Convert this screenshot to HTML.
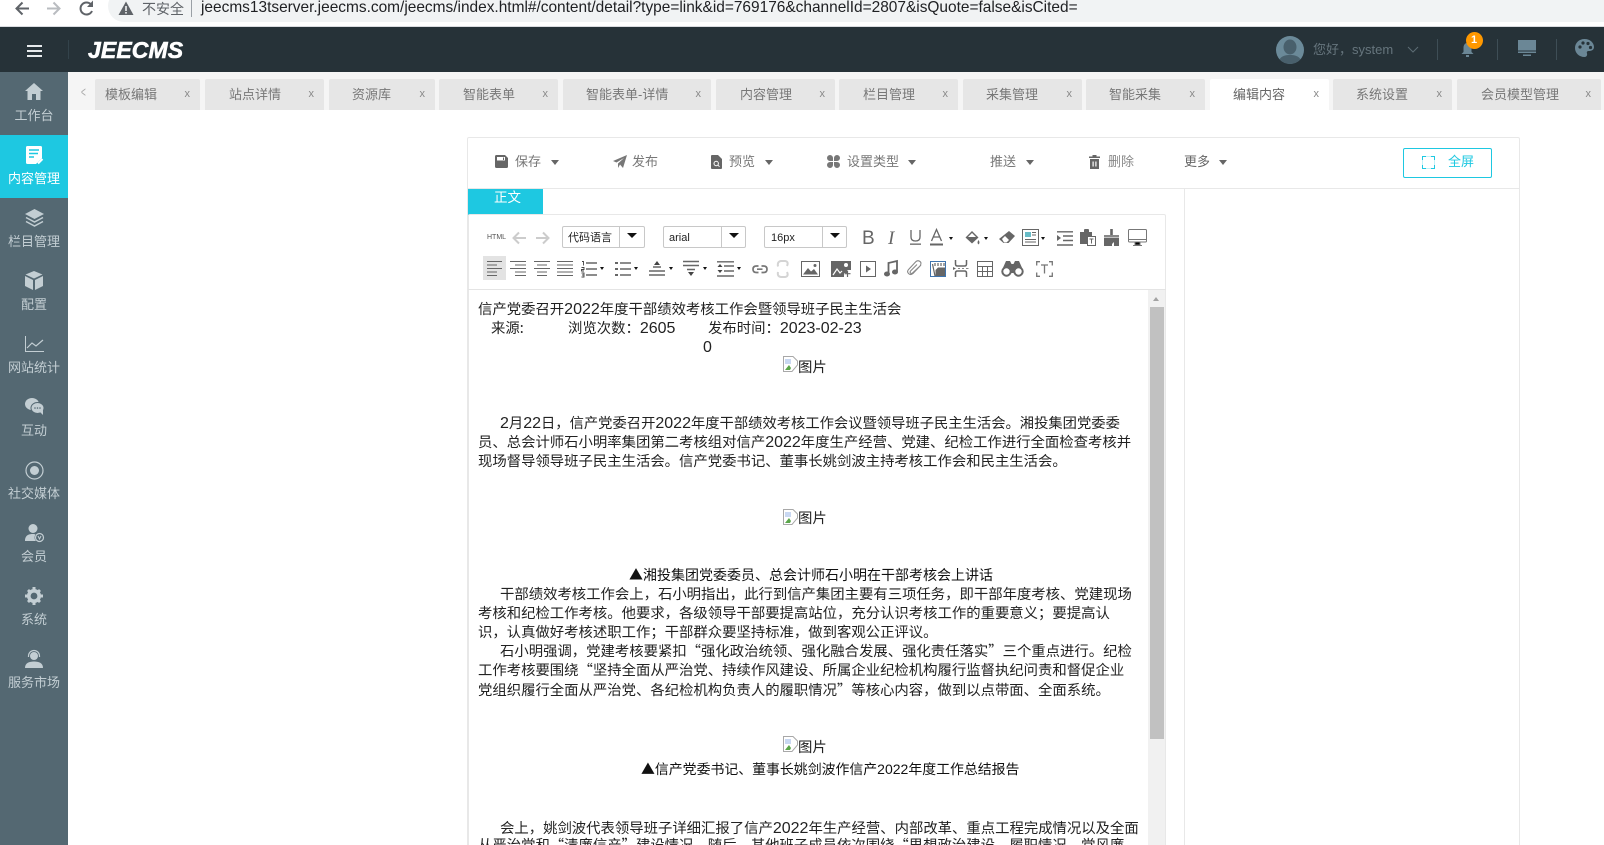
<!DOCTYPE html>
<html lang="zh"><head><meta charset="utf-8"><title>JEECMS</title>
<style>
*{box-sizing:border-box}
html,body{margin:0;padding:0;width:1604px;height:845px;overflow:hidden;background:#fff;font-family:"Liberation Sans","Noto Sans CJK SC",sans-serif}
#root{position:relative;width:1604px;height:845px;overflow:hidden;background:#fff}
.a{position:absolute}
.t{position:absolute;white-space:nowrap;line-height:20px}
svg{position:absolute;overflow:visible}
.tab{position:absolute;top:79px;height:31px;background:#e6e6e6;border-radius:2px 2px 0 0;color:#777;font-size:13px;line-height:31px;text-align:center}
.tab span{position:absolute;top:0;white-space:nowrap}
.tab b{position:absolute;top:0;font-weight:400;font-size:11px;color:#888;line-height:31px}
.nav{position:absolute;left:0;width:68px;height:63px}
.nav .lb{position:absolute;left:0;width:68px;top:34px;line-height:20px;text-align:center;font-size:13px;color:#c3ced3}
.btn{position:absolute;top:152px;font-size:13px;line-height:20px;color:#777;white-space:nowrap}
.car{position:absolute;width:0;height:0;border-left:4px solid transparent;border-right:4px solid transparent;border-top:5px solid #666;top:160px}
.sel{position:absolute;top:226px;height:22px;border:1px solid #c8c8c8;border-radius:2px;background:#fff;font-size:11px;line-height:22px;color:#222}
.sel i{position:absolute;top:0;bottom:0;width:1px;background:#c8c8c8}
.sel u{position:absolute;top:6px;width:0;height:0;border-left:5px solid transparent;border-right:5px solid transparent;border-top:5px solid #111}
.mc{position:absolute;width:0;height:0;border-left:2.5px solid transparent;border-right:2.5px solid transparent;border-top:3px solid #111}
.l{position:absolute;white-space:nowrap;line-height:20px;font-size:14.37px;color:#222;font-family:"Noto Sans CJK SC",sans-serif}
.l s{text-decoration:none;font-size:16px;font-family:"Liberation Sans",sans-serif}
#r2{position:absolute;left:0;top:1px;width:0;height:0}
</style></head><body><div id="root">

<!-- browser bar -->
<div class="a" style="left:0;top:0;width:1604px;height:27px;background:#fff;border-bottom:1px solid #dadce0"></div>
<div class="a" style="left:108px;top:-10px;width:1496px;height:32px;background:#f1f3f4;border-radius:16px 0 0 16px"></div>
<svg style="left:14px;top:0" width="16" height="18" viewBox="0 0 16 18"><path d="M15 8.500H3M8.500 2.500L2.500 8.500L8.500 14.500" fill="none" stroke="#5f6368" stroke-width="2"/></svg>
<svg style="left:46px;top:0" width="16" height="18" viewBox="0 0 16 18"><path d="M1 8.500H13M7.500 2.500L13.500 8.500L7.500 14.500" fill="none" stroke="#b9bcc0" stroke-width="2"/></svg>
<svg style="left:79px;top:0" width="16" height="18" viewBox="0 0 16 18"><path d="M13 11A6 6 0 1 1 12 4.500" fill="none" stroke="#5f6368" stroke-width="2"/><path d="M14 0.500V7H8z" fill="#5f6368"/></svg>
<svg style="left:118px;top:1px" width="16" height="15" viewBox="0 0 16 15"><path d="M8 0.500L15.500 14H.5z" fill="#5f6368"/><rect x="7.200" y="5" width="1.600" height="5" fill="#f1f3f4"/><rect x="7.200" y="11" width="1.600" height="1.600" fill="#f1f3f4"/></svg>
<div class="t" style="left:142px;top:-1px;font-size:14px;color:#5f6368">不安全</div>
<div class="a" style="left:191px;top:0;width:1px;height:17px;background:#9aa0a6"></div>
<div class="t" style="left:201px;top:-2px;font-size:15.45px;color:#202124">jeecms13tserver.jeecms.com/jeecms/index.html#/content/detail?type=link&amp;id=769176&amp;channelId=2807&amp;isQuote=false&amp;isCited=</div>

<!-- top header -->
<div class="a" style="left:0;top:27px;width:1604px;height:45px;background:#263238"></div>
<div class="a" style="left:27px;top:45px;width:15px;height:2px;background:#e6eaec"></div>
<div class="a" style="left:27px;top:50px;width:15px;height:2px;background:#e6eaec"></div>
<div class="a" style="left:27px;top:55px;width:15px;height:2px;background:#e6eaec"></div>
<div class="a" style="left:68px;top:40px;width:1px;height:19px;background:#33434b"></div>
<div class="t" style="left:88px;top:39px;font-size:23px;font-weight:700;font-style:italic;color:#fff;letter-spacing:.1px;line-height:22px;-webkit-text-stroke:.6px #fff">JEECMS</div>
<svg style="left:1276px;top:36px" width="28" height="28" viewBox="0 0 28 28"><defs><clipPath id="av"><circle cx="14" cy="14" r="14"/></clipPath></defs><circle cx="14" cy="14" r="14" fill="#6b8a99"/><g clip-path="url(#av)"><ellipse cx="14" cy="11" rx="6.500" ry="7.500" fill="#49606c"/><path d="M2 28C3 20 9 19 14 19S25 20 26 28z" fill="#49606c"/></g></svg>
<div class="t" style="left:1313px;top:40px;font-size:13px;color:#66757d">您好，system</div>
<svg style="left:1407px;top:46px" width="12" height="7" viewBox="0 0 12 7"><path d="M1 1L6 6L11 1" fill="none" stroke="#5d6c74" stroke-width="1"/></svg>
<div class="a" style="left:1437px;top:39px;width:1px;height:21px;background:#3e4e56"></div>
<svg style="left:1461px;top:42px" width="13" height="15" viewBox="0 0 13 15"><path d="M6.500 1C9.500 1 10.500 3.500 10.500 6V10L12.500 12H.5L2.500 10V6C2.500 3.500 3.500 1 6.500 1z" fill="#6b8796"/><rect x="5" y="13" width="3" height="2" fill="#6b8796"/></svg>
<div class="a" style="left:1465.500px;top:32px;width:17px;height:17px;border-radius:50%;background:#ff9800;color:#fff;font-size:11px;font-weight:700;line-height:17px;text-align:center">1</div>
<div class="a" style="left:1497px;top:39px;width:1px;height:21px;background:#3e4e56"></div>
<svg style="left:1518px;top:40px" width="18" height="16" viewBox="0 0 18 16"><rect width="18" height="10.500" fill="#6b8796"/><rect y="11.500" width="18" height="1.500" fill="#6b8796"/><rect x="5" y="14.500" width="8" height="1.500" fill="#6b8796"/></svg>
<div class="a" style="left:1556px;top:39px;width:1px;height:21px;background:#3e4e56"></div>
<svg style="left:1575px;top:39px" width="19" height="18" viewBox="0 0 19 18"><path d="M9.500 0C15 0 19 3.800 19 8C19 11 16.500 12 14 12C12 12 11.500 13 12 14.500C12.500 16.200 11.500 18 9.500 18C4 18 0 14 0 9S4 0 9.500 0z" fill="#6b8796"/><circle cx="5" cy="8" r="1.600" fill="#263238"/><circle cx="8" cy="4" r="1.600" fill="#263238"/><circle cx="13" cy="4.500" r="1.600" fill="#263238"/><circle cx="15.500" cy="8.500" r="1.600" fill="#263238"/></svg>

<!-- sidebar -->
<div class="a" style="left:0;top:72px;width:68px;height:773px;background:#546872"></div>
<div class="a" style="left:0;top:135px;width:68px;height:63px;background:#1ec8e1"></div>

<div class="nav" style="top:72px"><svg style="left:25px;top:11px" width="18" height="17" viewBox="0 0 18 17"><path d="M9 0L18 8H15.500V17H11V11H7V17H2.500V8H0z" fill="#c3ced3"/></svg><div class="lb">工作台</div></div>
<div class="nav" style="top:135px"><svg style="left:26px;top:11px" width="17" height="18" viewBox="0 0 17 18"><path d="M1.500 0H14.500Q16 0 16 1.500V12L10 18H1.500Q0 18 0 16.500V1.500Q0 0 1.500 0z" fill="#fff"/><path d="M3 4H13M3 7.500H12M3 11H8" stroke="#1ec8e1" stroke-width="1.500"/><path d="M16.500 13L12 17.500" stroke="#fff" stroke-width="2"/></svg><div class="lb" style="color:#fff">内容管理</div></div>
<div class="nav" style="top:198px"><svg style="left:25px;top:11px" width="19" height="18" viewBox="0 0 19 18"><path d="M9.500 0L19 5L9.500 10L0 5z" fill="#c3ced3"/><path d="M1 8.500L9.500 13L18 8.500M1 12.500L9.500 17L18 12.500" fill="none" stroke="#c3ced3" stroke-width="1.500"/></svg><div class="lb">栏目管理</div></div>
<div class="nav" style="top:261px"><svg style="left:25px;top:10px" width="18" height="19" viewBox="0 0 18 19"><path d="M9 0L17.500 3.500L9 7.500L.5 3.500z" fill="#c3ced3"/><path d="M0 5L8 9V19L0 15zM18 5L10 9V19L18 15z" fill="#c3ced3"/></svg><div class="lb">配置</div></div>
<div class="nav" style="top:324px"><svg style="left:25px;top:12px" width="19" height="16" viewBox="0 0 19 16"><path d="M.5 0V15.500H19" fill="none" stroke="#c3ced3"/><path d="M2 12L7 7L11 10L18 4" fill="none" stroke="#c3ced3" stroke-width="1.200"/></svg><div class="lb">网站统计</div></div>
<div class="nav" style="top:387px"><svg style="left:25px;top:11px" width="19" height="17" viewBox="0 0 19 17"><ellipse cx="7" cy="6" rx="7" ry="6" fill="#c3ced3"/><ellipse cx="12.500" cy="10" rx="6.500" ry="5.500" fill="#c3ced3" stroke="#546872"/><path d="M15 14L18 17V12z" fill="#c3ced3"/><circle cx="10" cy="10" r=".8" fill="#546872"/><circle cx="12.500" cy="10" r=".8" fill="#546872"/><circle cx="15" cy="10" r=".8" fill="#546872"/></svg><div class="lb">互动</div></div>
<div class="nav" style="top:450px"><svg style="left:25px;top:11px" width="19" height="19" viewBox="0 0 19 19"><circle cx="9.500" cy="9.500" r="8.500" fill="none" stroke="#c3ced3" stroke-width="1.200"/><circle cx="9.500" cy="9.500" r="4.500" fill="#c3ced3"/></svg><div class="lb">社交媒体</div></div>
<div class="nav" style="top:513px"><svg style="left:25px;top:11px" width="19" height="18" viewBox="0 0 19 18"><circle cx="8" cy="4.500" r="4.500" fill="#c3ced3"/><path d="M0 17C0 11 4 10 8 10C9 10 10 10 10.500 10.500C9 13 9.500 15.500 11 17z" fill="#c3ced3"/><circle cx="14.500" cy="13.500" r="4" fill="none" stroke="#c3ced3" stroke-width="1.200"/><path d="M13 12L14.500 15L16 12" fill="none" stroke="#c3ced3"/></svg><div class="lb">会员</div></div>
<div class="nav" style="top:576px"><svg style="left:25px;top:11px" width="18" height="18" viewBox="0 0 18 18"><circle cx="9" cy="9" r="5.200" fill="none" stroke="#c3ced3" stroke-width="3.600"/><path d="M7.500 0H10.500V3H7.500zM7.500 15H10.500V18H7.500zM0 7.500H3V10.500H0zM15 7.500H18V10.500H15zM2 4L4 2L6 4L4 6zM12 14L14 12L16 14L14 16zM2 14L4 12L6 14L4 16zM12 4L14 2L16 4L14 6z" fill="#c3ced3"/></svg><div class="lb">系统</div></div>
<div class="nav" style="top:639px"><svg style="left:25px;top:11px" width="18" height="18" viewBox="0 0 18 18"><circle cx="9" cy="6" r="4" fill="#c3ced3"/><path d="M3.500 7V6A5.500 5.500 0 0 1 14.500 6V7" fill="none" stroke="#c3ced3" stroke-width="1.200"/><path d="M0 18C0 13 4 11.500 9 11.500S18 13 18 18z" fill="#c3ced3"/></svg><div class="lb">服务市场</div></div>

<!-- tabs -->
<div class="a" style="left:68px;top:72px;width:1536px;height:38px;background:#f5f5f5"></div>
<div class="t" style="left:79px;top:83px;font-size:15px;color:#aaa;line-height:20px;transform:scaleX(.55)">&lt;</div>
<div class="tab" style="left:95px;width:105px"><span style="left:10px;top:0">模板编辑</span><b style="right:10px">x</b></div>
<div class="tab" style="left:205px;width:119px"><span style="left:24px">站点详情</span><b style="right:10px">x</b></div>
<div class="tab" style="left:329px;width:106px"><span style="left:23px">资源库</span><b style="right:10px">x</b></div>
<div class="tab" style="left:439px;width:119px"><span style="left:24px">智能表单</span><b style="right:10px">x</b></div>
<div class="tab" style="left:563px;width:148px"><span style="left:23px">智能表单-详情</span><b style="right:10px">x</b></div>
<div class="tab" style="left:716px;width:119px"><span style="left:24px">内容管理</span><b style="right:10px">x</b></div>
<div class="tab" style="left:839px;width:119px"><span style="left:24px">栏目管理</span><b style="right:10px">x</b></div>
<div class="tab" style="left:963px;width:119px"><span style="left:23px">采集管理</span><b style="right:10px">x</b></div>
<div class="tab" style="left:1086px;width:119px"><span style="left:23px">智能采集</span><b style="right:10px">x</b></div>
<div class="tab" style="left:1210px;width:119px;background:#fff;color:#666"><span style="left:23px">编辑内容</span><b style="right:10px">x</b></div>
<div class="tab" style="left:1333px;width:119px"><span style="left:23px">系统设置</span><b style="right:10px">x</b></div>
<div class="tab" style="left:1457px;width:144px"><span style="left:24px">会员模型管理</span><b style="right:10px">x</b></div>

<!-- main frame -->
<div class="a" style="left:467px;top:137px;width:1053px;height:720px;border:1px solid #e8e8e8;border-radius:2px"></div>
<div class="a" style="left:467px;top:188px;width:1053px;height:1px;background:#e8e8e8"></div>
<div class="a" style="left:1184px;top:188px;width:1px;height:660px;background:#e8e8e8"></div>

<!-- action toolbar -->
<svg style="left:495px;top:155px" width="13" height="13" viewBox="0 0 13 13"><path d="M1.500 0H10L13 3V11.500Q13 13 11.500 13H1.500Q0 13 0 11.500V1.500Q0 0 1.500 0z" fill="#666"/><rect x="2" y="2" width="8" height="3.500" fill="#fff"/><rect x="8" y="2.500" width="1" height="2.500" fill="#666"/></svg>
<div class="btn" style="left:515px">保存</div><div class="car" style="left:551px"></div>
<svg style="left:613px;top:155px" width="14" height="14" viewBox="0 0 14 14"><path d="M14 0L10 13L7 9.500L5 13V8.500L11 3L3.500 7.500L0 6z" fill="#777"/></svg>
<div class="btn" style="left:632px">发布</div>
<svg style="left:711px;top:155px" width="11" height="14" viewBox="0 0 11 14"><path d="M0 1Q0 0 1 0H7L11 4V13Q11 14 10 14H1Q0 14 0 13z" fill="#666"/><circle cx="5.200" cy="8.500" r="2.200" fill="none" stroke="#fff"/><path d="M7 10.200L8.500 11.700" stroke="#fff"/></svg>
<div class="btn" style="left:729px">预览</div><div class="car" style="left:765px"></div>
<svg style="left:827px;top:155px" width="13" height="13" viewBox="0 0 13 13"><path d="M3 0A3 3 0 0 1 6 3V6H3A3 3 0 0 1 3 0zM10 0A3 3 0 0 0 7 3V6H10A3 3 0 0 0 10 0zM3 13A3 3 0 0 1 3 7H6V10A3 3 0 0 1 3 13zM10 13A3 3 0 0 0 10 7H7V10A3 3 0 0 0 10 13z" fill="#777"/></svg>
<div class="btn" style="left:847px">设置类型</div><div class="car" style="left:908px"></div>
<div class="btn" style="left:990px">推送</div><div class="car" style="left:1026px"></div>
<svg style="left:1089px;top:155px" width="11" height="14" viewBox="0 0 11 14"><path d="M3.500 0H7.500V1.500H11V3H0V1.500H3.500zM1 4H10V14H1z" fill="#666"/><rect x="3.500" y="6.500" width="1.200" height="5" fill="#fff"/><rect x="6.300" y="6.500" width="1.200" height="5" fill="#fff"/></svg>
<div class="btn" style="left:1108px;color:#888">删除</div>
<div class="btn" style="left:1184px;color:#666">更多</div><div class="car" style="left:1219px"></div>
<div class="a" style="left:1403px;top:148px;width:89px;height:30px;border:1px solid #1ec8e1;border-radius:2px"></div>
<svg style="left:1422px;top:156px" width="13" height="13" viewBox="0 0 13 13"><path d="M.5 4V.5H4M9 .5H12.500V4M12.500 9V12.500H9M4 12.500H.5V9" fill="none" stroke="#1ec8e1"/><path d="M.5 4V9M12.500 4V9M4 .5H9M4 12.500H9" stroke="#1ec8e1" stroke-width=".5" opacity=".5"/></svg>
<div class="btn" style="left:1448px;color:#1ec8e1">全屏</div>

<!-- 正文 tab -->
<div class="a" style="left:468px;top:189px;width:75px;height:26px;background:#1ec8e1"></div>
<div class="t" style="left:494px;top:188px;font-size:13.500px;color:#fff">正文</div>

<!-- editor -->
<div class="a" style="left:468px;top:214px;width:698px;height:640px;border:1px solid #e8e8e8;border-radius:2px"></div>
<div class="a" style="left:468px;top:289px;width:698px;height:1px;background:#e4e4e4"></div>
<div class="a" style="left:1148px;top:290px;width:17px;height:560px;background:#f1f1f1"></div>
<div class="a" style="left:1153px;top:297px;width:0;height:0;border-left:3.500px solid transparent;border-right:3.500px solid transparent;border-bottom:4px solid #a3a3a3"></div>
<div class="a" style="left:1150px;top:307px;width:13.500px;height:432px;background:#c1c1c1"></div>

<div class="t" style="left:487px;top:228px;font-size:7px;color:#555">HTML</div>
<svg style="left:512px;top:231px" width="14" height="14" viewBox="0 0 14 14"><path d="M14 7H2M7 1.500L1.500 7L7 12.500" fill="none" stroke="#ccc" stroke-width="2"/></svg>
<svg style="left:536px;top:231px" width="14" height="14" viewBox="0 0 14 14"><path d="M0 7H12M7 1.500L12.500 7L7 12.500" fill="none" stroke="#ccc" stroke-width="2"/></svg>
<div class="sel" style="left:562px;width:83px;padding-left:5px">代码语言<i style="left:56px"></i><u style="left:64px"></u></div>
<div class="sel" style="left:663px;width:83px;padding-left:5px">arial<i style="left:57px"></i><u style="left:65px"></u></div>
<div class="sel" style="left:764px;width:83px;padding-left:6px">16px<i style="left:57px"></i><u style="left:65px"></u></div>

<div class="t" style="left:862px;top:229px;font-size:19px;color:#666;line-height:20px">B</div>
<div class="t" style="left:888px;top:229px;font-size:19px;color:#666;line-height:20px;font-family:'Liberation Serif';font-style:italic">I</div>
<svg style="left:909px;top:229px" width="13" height="18" viewBox="0 0 13 18"><path d="M2 1V8Q2 12 6.500 12T11 8V1" fill="none" stroke="#666" stroke-width="1.300"/><rect x="1" y="14.500" width="11" height="1.300" fill="#666"/></svg>
<svg style="left:930px;top:229px" width="13" height="18" viewBox="0 0 13 18"><path d="M1.500 12L6.500 0.500L11.500 12M3.500 8H9.500" fill="none" stroke="#666" stroke-width="1.300"/><rect y="14.500" width="13" height="2" fill="#666"/></svg>
<div class="mc" style="left:949px;top:237px"></div>
<svg style="left:965px;top:229px" width="16" height="18" viewBox="0 0 16 18"><path d="M7 2L13.500 8.500L7 14.500L.5 8.500z" fill="#666"/><path d="M3 8H11L7 4z" fill="#fff"/><path d="M13.500 11Q15.500 14 13.500 15.500Q11.500 14 13.500 11z" fill="#666"/></svg>
<div class="mc" style="left:984px;top:237px"></div>
<svg style="left:999px;top:231px" width="16" height="14" viewBox="0 0 16 14"><path d="M10 0L16 5L9.500 12H4.500L0 8z" fill="#666"/><path d="M3 8L6 5L10 9L7.500 11.500H5z" fill="#fff"/></svg>
<svg style="left:1022px;top:229px" width="17" height="17" viewBox="0 0 17 17"><rect x=".5" y=".5" width="16" height="16" fill="none" stroke="#666"/><rect x="3" y="3" width="6" height="5" fill="#68bcc7"/><path d="M10 3.500H14M10 6H14M3 10.500H14M3 13H14" stroke="#666"/></svg>
<div class="mc" style="left:1041px;top:237px"></div>
<svg style="left:1057px;top:231px" width="16" height="15" viewBox="0 0 16 15"><path d="M0 .8H16M6 5H16M6 9.500H16M0 14H16" stroke="#666" stroke-width="1.400"/><path d="M0 4L4 7L0 10z" fill="#666"/></svg>
<svg style="left:1080px;top:229px" width="16" height="17" viewBox="0 0 16 17"><path d="M0 3H4V1Q4 0 5 0H8Q9 0 9 1V3H12V7H7V15H0z" fill="#666"/><rect x="7.500" y="7.500" width="8" height="9" fill="#fff" stroke="#666"/><path d="M9.500 10H13.500M11.500 10V14.500" stroke="#666"/></svg>
<svg style="left:1104px;top:229px" width="15" height="17" viewBox="0 0 15 17"><rect x="6.200" width="2.600" height="6" fill="#666"/><rect y="6" width="15" height="2.500" fill="#888"/><path d="M0 9H15V17H10V13L8 15V17H0z" fill="#666"/></svg>
<svg style="left:1128px;top:229px" width="19" height="17" viewBox="0 0 19 17"><rect x=".5" y=".5" width="18" height="12.500" rx="1" fill="none" stroke="#777"/><path d="M.5 10.500H18.500M7 13.500V16H12V13.500M5 16.500H14" stroke="#777"/></svg>

<div class="a" style="left:483px;top:256px;width:23px;height:24px;background:#e3e3e3"></div>
<div id="r2">
<svg style="left:487px;top:260px" width="15" height="16" viewBox="0 0 15 16"><path d="M0 .5H15M0 4H10M0 7.500H15M0 11H10M0 14.500H10" stroke="#666"/></svg>
<svg style="left:510px;top:260px" width="16" height="16" viewBox="0 0 16 16"><path d="M0 .5H16M5 4H16M0 7.500H16M5 11H16M5 14.500H16" stroke="#666"/></svg>
<svg style="left:534px;top:260px" width="16" height="16" viewBox="0 0 16 16"><path d="M0 .5H16M3 4H13M0 7.500H16M3 11H13M3 14.500H13" stroke="#666"/></svg>
<svg style="left:557px;top:260px" width="16" height="16" viewBox="0 0 16 16"><path d="M0 .5H16M0 4H16M0 7.500H16M0 11H16M0 14.500H16" stroke="#666"/></svg>
<svg style="left:581px;top:260px" width="16" height="16" viewBox="0 0 16 16"><path d="M5 2H16M5 8H16M5 14H16" stroke="#666" stroke-width="1.500"/><path d="M1 .5H2.500V4.500M.5 6.500H3V8.500H.5V10H3M.5 12H3V14H1M3 14V16H.5" stroke="#444" stroke-width=".9" fill="none"/></svg>
<div class="mc" style="left:600px;top:266px"></div>
<svg style="left:615px;top:260px" width="16" height="16" viewBox="0 0 16 16"><path d="M5 2H16M5 8H16M5 14H16" stroke="#666" stroke-width="1.500"/><path d="M0 1H3V3H0zM0 7H3V9H0zM0 13H3V15H0z" fill="#666"/></svg>
<div class="mc" style="left:634px;top:266px"></div>
<svg style="left:649px;top:259px" width="16" height="17" viewBox="0 0 16 17"><path d="M8 1L11 5H5z" fill="#444"/><path d="M4 7H12M0 11H16M0 15H16" stroke="#666" stroke-width="1.600"/></svg>
<div class="mc" style="left:669px;top:266px"></div>
<svg style="left:683px;top:259px" width="16" height="17" viewBox="0 0 16 17"><path d="M0 1.500H16M0 5.500H16M4 9.500H12" stroke="#666" stroke-width="1.600"/><path d="M8 16L5 12H11z" fill="#444"/></svg>
<div class="mc" style="left:703px;top:266px"></div>
<svg style="left:717px;top:260px" width="17" height="16" viewBox="0 0 17 16"><path d="M0 .8H17M7 5H17M7 10H17M0 15H17" stroke="#666" stroke-width="1.400"/><path d="M3 3L5.500 6H.5zM3 12L.5 9H5.500z" fill="#444"/></svg>
<div class="mc" style="left:737px;top:266px"></div>
<svg style="left:752px;top:262px" width="16" height="12" viewBox="0 0 16 12"><path d="M6.500 3H4.500Q1 3 1 6.200T4.500 9.500H6.500M9.500 3H11.500Q15 3 15 6.200T11.500 9.500H9.500M5 6.200H10.500" fill="none" stroke="#777" stroke-width="1.700"/></svg>
<svg style="left:775px;top:259px" width="16" height="18" viewBox="0 0 16 18"><path d="M3 6.500Q2 1.500 6 1H10Q14 1.500 12 6M3 12Q2 16.500 6 17H10Q14 16.500 12 12" fill="none" stroke="#d4d4d4" stroke-width="2"/></svg>
<svg style="left:801px;top:260px" width="19" height="16" viewBox="0 0 19 16"><rect x=".5" y=".5" width="18" height="15" fill="#fff" stroke="#666"/><path d="M2 13.500L7 7L10 10.500L13 8L17 13.500z" fill="#666"/><circle cx="14" cy="4.500" r="1.500" fill="#666"/></svg>
<svg style="left:831px;top:260px" width="20" height="16" viewBox="0 0 20 16"><path d="M0 0H20V9H16V12H13V16H0z" fill="#666"/><path d="M2 14L6 8L9 12L11 10" fill="none" stroke="#fff" stroke-width="1.200"/><circle cx="15" cy="4" r="2" fill="#fff"/><path d="M16.500 9.500V16M13.500 12.700H19.500" stroke="#666" stroke-width="1.200"/></svg>
<svg style="left:860px;top:260px" width="16" height="16" viewBox="0 0 16 16"><rect x=".5" y=".5" width="15" height="15" fill="none" stroke="#666"/><path d="M6 4.500L11 8L6 11.500z" fill="#666"/></svg>
<svg style="left:884px;top:259px" width="14" height="17" viewBox="0 0 14 17"><path d="M4.500 13.500V3L13 1V11.500" fill="none" stroke="#666" stroke-width="1.800"/><ellipse cx="3" cy="14" rx="3" ry="2.500" fill="#666"/><ellipse cx="11" cy="12" rx="3" ry="2.500" fill="#666"/></svg>
<svg style="left:906px;top:259px" width="17" height="17" viewBox="0 0 17 17"><path d="M15 5L7 13.500Q4.500 15.500 2.500 13.500T3 9L10 1.500Q12 0 14 1.500T14 6L6.500 13Q5.500 14 4.500 13T5 10.500L11 4.500" fill="none" stroke="#888" stroke-width="1.100"/></svg>
<svg style="left:930px;top:260px" width="16" height="16" viewBox="0 0 16 16"><rect x=".5" y=".5" width="15" height="15" fill="#fff" stroke="#3f74ae"/><path d="M5.500 9L8 6.500L15 6.500V15H5.500z" fill="#666"/><path d="M5 2V5M8 2V5M11 2V5M14 2V5M2.500 3L5 15" stroke="#666" stroke-width="1.200"/></svg>
<svg style="left:953px;top:259px" width="16" height="17" viewBox="0 0 16 17"><path d="M2.500 0V4Q2.500 6 4.500 6H11.500Q13.500 6 13.500 4V0M2.500 17V13Q2.500 11 4.500 11H11.500Q13.500 11 13.500 13V17" fill="none" stroke="#666" stroke-width="1.500"/><path d="M5 8.500H7M9 8.500H11M13 8.500H15.500" stroke="#888"/><path d="M0 7L3 8.500L0 10z" fill="#666"/></svg>
<svg style="left:977px;top:260px" width="16" height="16" viewBox="0 0 16 16"><path d="M.5 .5H15.500V15.500H.5zM.5 5.500H15.500M.5 10.500H15.500M5.500 5.500V15.500M10.500 5.500V15.500" fill="none" stroke="#666"/></svg>
<svg style="left:1001px;top:260px" width="23" height="16" viewBox="0 0 23 16"><path d="M5 0H9L10.500 3H12.500L14 0H18L22 9H1z" fill="#666"/><circle cx="5.500" cy="10.500" r="4.200" fill="#fff" stroke="#666" stroke-width="2"/><circle cx="17.500" cy="10.500" r="4.200" fill="#fff" stroke="#666" stroke-width="2"/><rect x="10.500" y="7" width="2" height="5" fill="#666"/></svg>
<svg style="left:1036px;top:260px" width="17" height="16" viewBox="0 0 17 16"><path d="M4 .7H.7V4.500M13 .7H16.300V4.500M16.300 11.500V15.300H13M4 15.300H.7V11.500" fill="none" stroke="#777" stroke-width="1.300"/><path d="M5 4H12M8.500 4V12.500" stroke="#777" stroke-width="1.300"/></svg>
</div>

<!-- body text -->
<div class="l" style="left:478px;top:298.500px">信产党委召开<s>2022</s>年度干部绩效考核工作会暨领导班子民主生活会</div>
<div class="l" style="left:491px;top:317.500px">来源:</div>
<div class="l" style="left:568px;top:317.500px">浏览次数：<s>2605</s></div>
<div class="l" style="left:708px;top:317.500px">发布时间：<s>2023-02-23</s></div>
<div class="l" style="left:703px;top:336.500px"><s>0</s></div>
<svg style="left:783px;top:356px" width="15" height="16" viewBox="0 0 15 16"><path d="M.5 .5H10L14.500 5V9L9 15.500H.5z" fill="#fff" stroke="#a8a8a8"/><path d="M2 14L6 9L8 12L7 14z" fill="#5aa64a"/><path d="M2 3H8V8H2z" fill="#c9d8f2"/></svg>
<div class="l" style="left:798px;top:356.500px">图片</div>

<div class="l" style="left:500px;top:412.500px;font-size:14.3px"><s>2</s>月<s>22</s>日，信产党委召开<s>2022</s>年度干部绩效考核工作会议暨领导班子民主生活会。湘投集团党委委</div>
<div class="l" style="left:478px;top:432px">员、总会计师石小明率集团第二考核组对信产<s>2022</s>年度生产经营、党建、纪检工作进行全面检查考核并</div>
<div class="l" style="left:478px;top:451px">现场督导领导班子民主生活会。信产党委书记、董事长姚剑波主持考核工作会和民主生活会。</div>

<svg style="left:783px;top:509px" width="15" height="16" viewBox="0 0 15 16"><path d="M.5 .5H10L14.500 5V9L9 15.500H.5z" fill="#fff" stroke="#a8a8a8"/><path d="M2 14L6 9L8 12L7 14z" fill="#5aa64a"/><path d="M2 3H8V8H2z" fill="#c9d8f2"/></svg>
<div class="l" style="left:798px;top:508px">图片</div>

<div class="l" style="left:629px;top:565px;font-size:14px;color:#111">▲湘投集团党委委员、总会计师石小明在干部考核会上讲话</div>
<div class="l" style="left:500px;top:583.500px">干部绩效考核工作会上，石小明指出，此行到信产集团主要有三项任务，即干部年度考核、党建现场</div>
<div class="l" style="left:478px;top:603px">考核和纪检工作考核。他要求，各级领导干部要提高站位，充分认识考核工作的重要意义；要提高认</div>
<div class="l" style="left:478px;top:622px">识，认真做好考核述职工作；干部群众要坚持标准，做到客观公正评议。</div>
<div class="l" style="left:500px;top:641px">石小明强调，党建考核要紧扣“强化政治统领、强化融合发展、强化责任落实”三个重点进行。纪检</div>
<div class="l" style="left:478px;top:660px">工作考核要围绕“坚持全面从严治党、持续作风建设、所属企业纪检机构履行监督执纪问责和督促企业</div>
<div class="l" style="left:478px;top:679.500px">党组织履行全面从严治党、各纪检机构负责人的履职情况”等核心内容，做到以点带面、全面系统。</div>

<svg style="left:783px;top:736px" width="15" height="16" viewBox="0 0 15 16"><path d="M.5 .5H10L14.500 5V9L9 15.500H.5z" fill="#fff" stroke="#a8a8a8"/><path d="M2 14L6 9L8 12L7 14z" fill="#5aa64a"/><path d="M2 3H8V8H2z" fill="#c9d8f2"/></svg>
<div class="l" style="left:798px;top:736.500px">图片</div>
<div class="l" style="left:641px;top:758.500px;color:#111;font-size:13.9px">▲信产党委书记、董事长姚剑波作信产<s style="font-size:14px">2022</s>年度工作总结报告</div>
<div class="l" style="left:500px;top:817.500px">会上，姚剑波代表领导班子详细汇报了信产<s>2022</s>年生产经营、内部改革、重点工程完成情况以及全面</div>
<div class="l" style="left:478px;top:835px">从严治党和“清廉信产”建设情况。随后，其他班子成员依次围绕“思想政治建设、履职情况、党风廉</div>

</div></body></html>
